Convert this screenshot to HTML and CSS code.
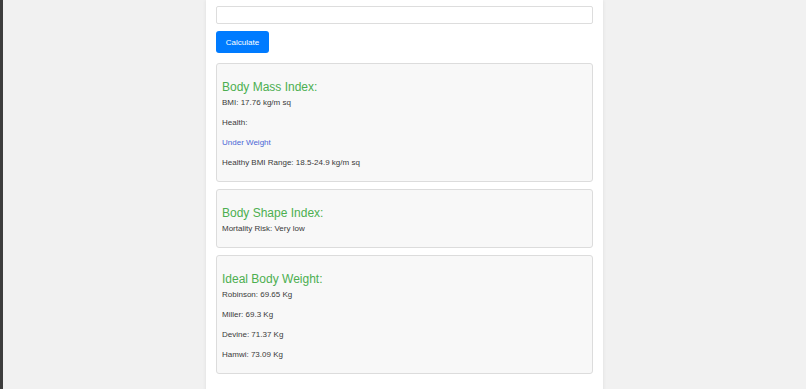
FILE: index.html
```html
<!DOCTYPE html>
<html lang="en">
<head>
    <meta charset="UTF-8">
    <meta name="viewport" content="width=device-width, initial-scale=1.0">
    <title>Body Calculator</title>
    <link rel="stylesheet" href="styles.css">
</head>
<body>
    <div class="container">
        <input type="text" class="field">
        <button class="btn">Calculate</button>

        <div class="result">
            <h3>Body Mass Index:</h3>
            <p>BMI: 17.76 kg/m sq</p>
            <p>Health:</p>
            <p class="status">Under Weight</p>
            <p>Healthy BMI Range: 18.5-24.9 kg/m sq</p>
        </div>

        <div class="result">
            <h3>Body Shape Index:</h3>
            <p>Mortality Risk: Very low</p>
        </div>

        <div class="result">
            <h3>Ideal Body Weight:</h3>
            <p>Robinson: 69.65 Kg</p>
            <p>Miller: 69.3 Kg</p>
            <p>Devine: 71.37 Kg</p>
            <p>Hamwi: 73.09 Kg</p>
        </div>
    </div>
</body>
</html>
```

FILE: styles.css
```css
html, body {
    margin: 0;
    height: 100%;
}
body {
    font-family: "Liberation Sans", Arial, sans-serif;
    font-size: 8px;
    color: #3a3a3a;
    background-color: #f1f1f1;
    border-left: 3px solid #3d3d3d;
    box-sizing: border-box;
    overflow: hidden;
}
.container {
    width: 397px;
    margin: 0 auto;
    padding: 6px 10px 16px;
    background: white;
    box-shadow: 0 0 4px rgba(0,0,0,0.08);
    min-height: 100%;
    box-sizing: border-box;
}
.field {
    display: block;
    width: 100%;
    height: 18px;
    box-sizing: border-box;
    border: 1px solid #ddd;
    border-radius: 2px;
    margin: 0 0 7px;
    padding: 0 5px;
    font: inherit;
}
.btn {
    display: block;
    width: 53px;
    height: 22px;
    margin: 0 0 10px;
    padding: 0;
    border: none;
    border-radius: 3px;
    background-color: #007bff;
    color: white;
    font-family: inherit;
    font-size: 8px;
}
.result {
    background-color: #f8f8f8;
    border: 1px solid #dcdcdc;
    border-radius: 3px;
    padding: 6px 5px 4px;
    margin-bottom: 7px;
}
.result h3 {
    margin: 10px 0 3px;
    font-size: 12px;
    line-height: 14px;
    font-weight: normal;
    color: #4caf50;
}
.result p {
    margin: 0 0 8px;
    line-height: 12px;
}
.status {
    color: #4a67d6;
}
```
